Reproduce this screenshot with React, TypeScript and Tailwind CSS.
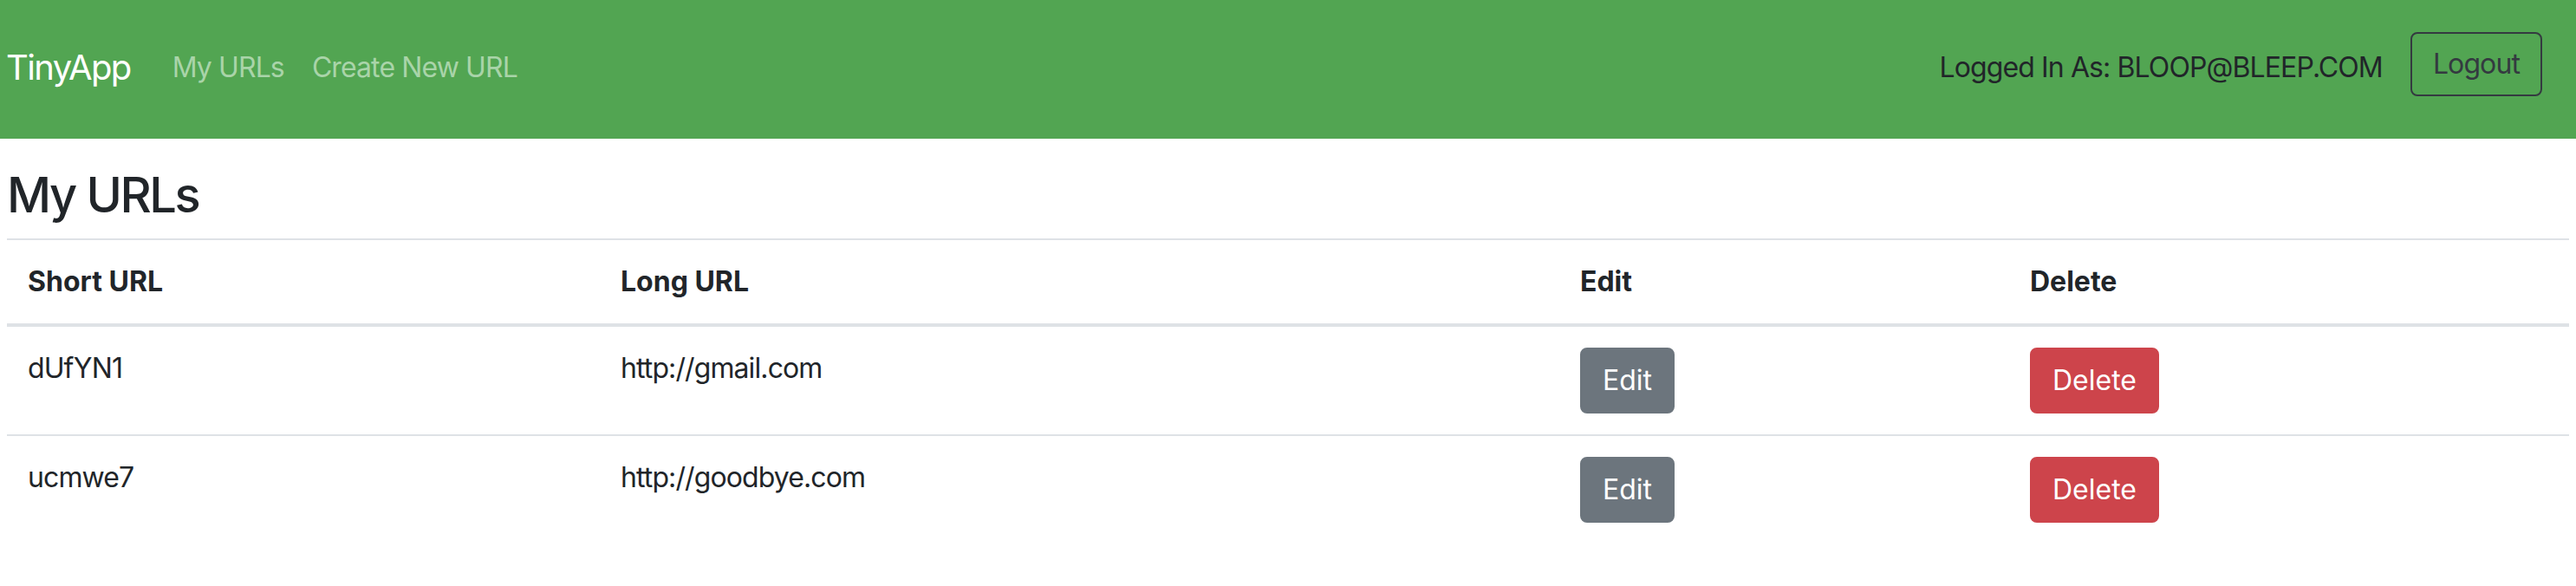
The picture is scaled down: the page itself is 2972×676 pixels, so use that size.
const urls = [
  { id: "dUfYN1", longURL: "http://gmail.com" },
  { id: "ucmwe7", longURL: "http://goodbye.com" },
];

const cellCls = "border-t-2 border-[#dee2e6] p-[24px] align-top text-left";

export default function App() {
  return (
    <div className="min-h-[676px] bg-white font-['Inter','Liberation_Sans',sans-serif] text-[32px] leading-[1.5] tracking-[-0.028em] text-[#212529]">
      <nav className="flex h-[160px] items-center bg-[#52a552] pb-[44px] pl-[7px] pr-[39px] pt-[40px]">
        <a className="mr-[32px] py-[10px] text-[40px] leading-[60px] tracking-[-0.04em] text-white">TinyApp</a>
        <a className="px-[16px] py-[16px] text-[#a9d4a9]">My URLs</a>
        <a className="px-[16px] py-[16px] text-[#a9d4a9]">Create New URL</a>
        <div className="ml-auto flex items-center gap-[32px]">
          <span className="text-[#212529]">Logged In As: BLOOP@BLEEP.COM</span>
          <button className="-mt-[8px] h-[74px] rounded-[8px] border-2 border-[#343a40] px-[24px] text-[#343a40]">
            Logout
          </button>
        </div>
      </nav>

      <main className="px-[8px]">
        <h3 className="mb-[16px] mt-[32px] text-[56px] font-medium leading-[1.2] tracking-[-0.043em]">My URLs</h3>
        <table className="w-full table-fixed border-collapse">
          <colgroup>
            <col className="w-[684px]" />
            <col className="w-[1107px]" />
            <col className="w-[519px]" />
            <col />
          </colgroup>
          <thead>
            <tr>
              {["Short URL", "Long URL", "Edit", "Delete"].map((h) => (
                <th key={h} className={`${cellCls} border-b-4 font-bold tracking-normal`}>
                  {h}
                </th>
              ))}
            </tr>
          </thead>
          <tbody>
            {urls.map((u) => (
              <tr key={u.id}>
                <td className={cellCls}>{u.id}</td>
                <td className={cellCls}>{u.longURL}</td>
                <td className={cellCls}>
                  <button className="h-[76px] rounded-[8px] border-2 border-[#6c757d] bg-[#6c757d] px-[24px] tracking-normal text-white">
                    Edit
                  </button>
                </td>
                <td className={cellCls}>
                  <button className="h-[76px] rounded-[8px] border-2 border-[#cd444b] bg-[#cd444b] px-[24px] tracking-normal text-white">
                    Delete
                  </button>
                </td>
              </tr>
            ))}
          </tbody>
        </table>
      </main>
    </div>
  );
}
